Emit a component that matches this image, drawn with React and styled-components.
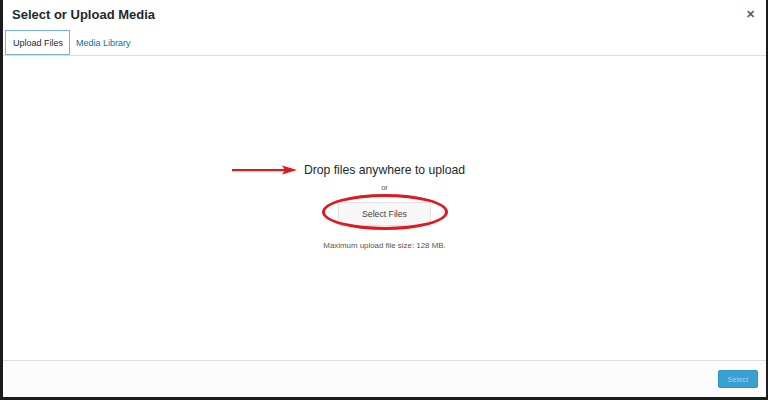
import React from 'react';
import styled, { createGlobalStyle } from 'styled-components';

const GlobalStyle = createGlobalStyle`
  html, body {
    margin: 0;
    padding: 0;
    background-color: #1b1b1b;
  }
  body {
    font-family: "Liberation Sans", Arial, sans-serif;
  }
`;

const Frame = styled.div`
  width: 768px;
  height: 400px;
  box-sizing: border-box;
  padding: 0 2px 3px 3px;
  background-color: #1b1b1b;
  display: flex;
`;

const Modal = styled.div`
  flex: 1;
  display: flex;
  flex-direction: column;
  background-color: #ffffff;
`;

const Header = styled.div`
  height: 29px;
  display: flex;
  align-items: center;
  justify-content: space-between;
  padding: 0 11px 0 9px;
`;

const Title = styled.h1`
  margin: 0;
  font-size: 13px;
  font-weight: bold;
  color: #23282d;
`;

const Close = styled.span`
  font-size: 11px;
  font-weight: bold;
  color: #555d66;
  line-height: 1;
`;

const Tabs = styled.div`
  height: 26px;
  display: flex;
  align-items: flex-start;
  padding-left: 2px;
  border-bottom: 1px solid #dddddd;
`;

const Tab = styled.div`
  height: 25px;
  box-sizing: border-box;
  margin-top: 1px;
  display: flex;
  align-items: center;
  padding: ${props => (props.active ? '0 6px 0 7px' : '0 5px')};
  font-size: 9px;
  color: ${props => (props.active ? '#23282d' : '#0073aa')};
  border: 1px solid ${props => (props.active ? '#7fb1de' : 'transparent')};
`;

const Body = styled.div`
  flex: 1;
  display: flex;
  flex-direction: column;
  align-items: center;
  justify-content: center;
  padding-bottom: 4px;
`;

const HeadingWrap = styled.div`
  position: relative;
`;

const Heading = styled.p`
  margin: 0;
  font-size: 12.2px;
  line-height: 16px;
  color: #23282d;
`;

const ArrowMark = styled.svg`
  position: absolute;
  right: 100%;
  margin-right: 7px;
  top: 3px;
`;

const Or = styled.p`
  margin: 5px 0 0;
  font-size: 7.5px;
  line-height: 10px;
  color: #555;
`;

const ButtonWrap = styled.div`
  position: relative;
  margin-top: 9px;
`;

const BrowseButton = styled.button`
  width: 93px;
  height: 24px;
  background-color: #f7f7f7;
  border: 1px solid #e2e2e2;
  border-radius: 2px;
  font-family: inherit;
  font-size: 8.7px;
  color: #444;
  padding: 0;
`;

const Ring = styled.div`
  position: absolute;
  left: -16px;
  top: -8px;
  width: 126px;
  height: 36px;
  box-sizing: border-box;
  border: 3px solid #dc1a1f;
  border-radius: 50%;
  pointer-events: none;
`;

const MaxSize = styled.p`
  margin: 15px 0 0;
  font-size: 7.9px;
  line-height: 10px;
  color: #555;
`;

const Footer = styled.div`
  height: 36px;
  border-top: 1px solid #dddddd;
  background-color: #fcfcfc;
  display: flex;
  align-items: center;
  justify-content: flex-end;
  padding-right: 8px;
`;

const SelectButton = styled.button`
  width: 40px;
  height: 18px;
  padding: 0;
  background-color: #3a9fd1;
  border: 1px solid #2f93c5;
  border-radius: 2px;
  font-family: inherit;
  font-size: 7.5px;
  color: #a6d3ea;
`;

export default function App() {
  return (
    <Frame>
      <GlobalStyle />
      <Modal>
        <Header>
          <Title>Select or Upload Media</Title>
          <Close>✕</Close>
        </Header>
        <Tabs>
          <Tab active>Upload Files</Tab>
          <Tab>Media Library</Tab>
        </Tabs>
        <Body>
          <HeadingWrap>
            <ArrowMark width="65" height="10" viewBox="0 0 65 10">
              <rect x="0" y="4" width="54" height="2.2" fill="#dc1a1f" />
              <polygon points="50,0.5 65,5 50,9.5 53,5" fill="#dc1a1f" />
            </ArrowMark>
            <Heading>Drop files anywhere to upload</Heading>
          </HeadingWrap>
          <Or>or</Or>
          <ButtonWrap>
            <BrowseButton>Select Files</BrowseButton>
            <Ring />
          </ButtonWrap>
          <MaxSize>Maximum upload file size: 128 MB.</MaxSize>
        </Body>
        <Footer>
          <SelectButton>Select</SelectButton>
        </Footer>
      </Modal>
    </Frame>
  );
}
